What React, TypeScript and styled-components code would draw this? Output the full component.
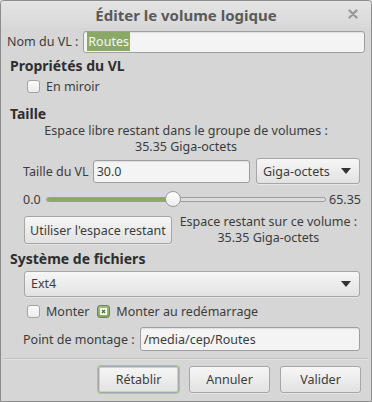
import styled, { createGlobalStyle } from 'styled-components';

const GlobalStyle = createGlobalStyle`
  html, body {
    margin: 0;
    padding: 0;
    background: #d6d6d6;
  }
  body {
    font-family: 'Noto Sans', 'DejaVu Sans', sans-serif;
    font-size: 12.5px;
    color: #3c3c3c;
  }
`;

const Window = styled.div`
  box-sizing: border-box;
  width: 372px;
  height: 402px;
  border: 1px solid #8c8c8c;
  border-radius: 4px 4px 0 0;
  background: #d6d6d6;
  display: flex;
  flex-direction: column;
  overflow: hidden;
`;

const TitleBar = styled.div`
  height: 27px;
  display: flex;
  align-items: center;
  justify-content: center;
  position: relative;
  background: linear-gradient(#e4e4e4, #d8d8d8);
`;

const Title = styled.div`
  font-weight: bold;
  font-size: 15px;
  color: #5a5a5a;
`;

const Close = styled.div`
  position: absolute;
  right: 12px;
  top: 7px;
  width: 12px;
  height: 12px;
  display: flex;
  align-items: center;
  justify-content: center;
`;

const Body = styled.div`
  display: flex;
  flex-direction: column;
  padding: 0 6px 0 6px;
`;

const Row = styled.div<{ $h: number; $pl?: number; $gap?: number }>`
  height: ${(p) => p.$h}px;
  display: flex;
  align-items: center;
  padding-left: ${(p) => p.$pl ?? 0}px;
  gap: ${(p) => p.$gap ?? 0}px;
`;

const Label = styled.span`
  white-space: nowrap;
`;

const Heading = styled.div<{ $h: number }>`
  height: ${(p) => p.$h}px;
  line-height: 18px;
  display: flex;
  align-items: flex-end;
  padding-left: 3px;
  font-weight: bold;
  font-size: 14px;
  color: #2e2e2e;
`;

const Entry = styled.div<{ $h?: number }>`
  box-sizing: border-box;
  height: ${(p) => p.$h ?? 22}px;
  flex: 1;
  display: flex;
  align-items: center;
  padding-left: 3px;
  background: #f4f4f4;
  border: 1px solid #9e9e9e;
  border-radius: 3px;
  box-shadow: inset 0 1px 1px rgba(0, 0, 0, 0.08);
`;

const Selected = styled.span`
  background: #8aa866;
  color: #f6f6f6;
  padding: 1px 1px;
`;

const Button = styled.div<{ $focus?: boolean; $w?: number; $h?: number }>`
  box-sizing: border-box;
  width: ${(p) => (p.$w ? `${p.$w}px` : 'auto')};
  height: ${(p) => p.$h ?? 27}px;
  padding: 0 5px;
  display: flex;
  align-items: center;
  justify-content: center;
  white-space: nowrap;
  background: linear-gradient(#f6f6f6, #e2e2e2);
  border: 1px solid #a6a6a6;
  border-radius: 3px;
  box-shadow: ${(p) => (p.$focus ? '0 0 0 1px #a9c88e, inset 0 0 0 1px #c4dbb0' : '0 1px 0 rgba(255,255,255,0.4)')};
`;

const Combo = styled(Button)`
  justify-content: space-between;
  padding: 0 8px 0 6px;
  flex: ${(p) => (p.$w ? 'none' : '1')};
  margin-right: 5px;
`;

const Arrow = styled.span`
  width: 0;
  height: 0;
  border-left: 5px solid transparent;
  border-right: 5px solid transparent;
  border-top: 6px solid #333;
`;

const Check = styled.span<{ $on?: boolean }>`
  box-sizing: border-box;
  width: 13px;
  height: 13px;
  border-radius: 3px;
  border: 1px solid ${(p) => (p.$on ? '#6f7f5e' : '#a4a4a4')};
  background: ${(p) => (p.$on ? 'linear-gradient(#9fbd80, #88a767)' : 'linear-gradient(#fbfbfb, #ececec)')};
  display: inline-flex;
  align-items: center;
  justify-content: center;
  flex-shrink: 0;
`;

const Info = styled.div<{ $grow?: boolean }>`
  text-align: center;
  line-height: 16px;
  flex: ${(p) => (p.$grow ? '1' : 'none')};
`;

const Slider = styled.div`
  flex: 1;
  height: 18px;
  position: relative;
  display: flex;
  align-items: center;
  margin: 0 3px 0 5px;
`;

const Track = styled.div`
  box-sizing: border-box;
  width: 100%;
  height: 5px;
  border-radius: 3px;
  border: 1px solid #9c9c9c;
  background: #dcdcdc;
  overflow: hidden;
`;

const Fill = styled.div`
  height: 100%;
  background: #8aa866;
`;

const Knob = styled.div`
  position: absolute;
  top: 1px;
  width: 16px;
  height: 16px;
  margin-left: -8px;
  border-radius: 50%;
  box-sizing: border-box;
  border: 1px solid #9a9a9a;
  background: linear-gradient(#ffffff, #ececec);
`;

const Separator = styled.div`
  height: 1px;
  margin: 3px -3px 0;
  background: #c2c2c2;
  border-bottom: 1px solid #e2e2e2;
`;

const Footer = styled.div`
  display: flex;
  justify-content: flex-end;
  gap: 10px;
  padding: 6px 4px 0 0;
`;

export default function App() {
  const pct = 124 / 274;
  return (
    <>
      <GlobalStyle />
      <Window>
        <TitleBar>
          <Title>Éditer le volume logique</Title>
          <Close>
            <svg width="10" height="10" viewBox="0 0 10 10">
              <path d="M1.5 1.5 L8.5 8.5 M8.5 1.5 L1.5 8.5" stroke="#9a9a9a" strokeWidth="2.4" strokeLinecap="round" />
            </svg>
          </Close>
        </TitleBar>
        <Body>
          <Row $h={27} $gap={5}>
            <Label>Nom du VL :</Label>
            <Entry>
              <Selected>Routes</Selected>
            </Entry>
          </Row>
          <Heading $h={20}>Propriétés du VL</Heading>
          <Row $h={22} $pl={20} $gap={6}>
            <Check />
            <Label>En miroir</Label>
          </Row>
          <Heading $h={26}>Taille</Heading>
          <Info>
            <div>Espace libre restant dans le groupe de volumes :</div>
            <div>35.35 Giga-octets</div>
          </Info>
          <Row $h={32} $pl={16} $gap={4}>
            <Label>Taille du VL</Label>
            <Entry $h={23}>30.0</Entry>
            <Combo $w={104} $h={26} style={{ marginLeft: 2 }}>
              Giga-octets
              <Arrow />
            </Combo>
          </Row>
          <Row $h={24} $pl={16}>
            <Label>0.0</Label>
            <Slider>
              <Track>
                <Fill style={{ width: `${pct * 100}%` }} />
              </Track>
              <Knob style={{ left: `${pct * 100}%` }} />
            </Slider>
            <Label style={{ marginRight: 4 }}>65.35</Label>
          </Row>
          <Row $h={38} $pl={17}>
            <Button $h={28}>Utiliser l'espace restant</Button>
            <Info $grow>
              <div>Espace restant sur ce volume :</div>
              <div>35.35 Giga-octets</div>
            </Info>
          </Row>
          <Heading $h={19}>Système de fichiers</Heading>
          <Row $h={31} $pl={17}>
            <Combo $h={26}>
              Ext4
              <Arrow />
            </Combo>
          </Row>
          <Row $h={24} $pl={20} $gap={6}>
            <Check />
            <Label style={{ marginRight: 2 }}>Monter</Label>
            <Check $on>
              <svg width="7" height="7" viewBox="0 0 7 7">
                <rect x="0" y="0" width="7" height="7" fill="#f4f8ef" />
                <path d="M2 2 L5 5 M5 2 L2 5" stroke="#4d6b33" strokeWidth="1.2" />
              </svg>
            </Check>
            <Label>Monter au redémarrage</Label>
          </Row>
          <Row $h={32} $pl={16} $gap={5}>
            <Label>Point de montage :</Label>
            <Entry $h={24} style={{ marginRight: 5 }}>/media/cep/Routes</Entry>
          </Row>
          <Separator />
          <Footer>
            <Button $w={81} $focus>Rétablir</Button>
            <Button $w={81}>Annuler</Button>
            <Button $w={81}>Valider</Button>
          </Footer>
        </Body>
      </Window>
    </>
  );
}
